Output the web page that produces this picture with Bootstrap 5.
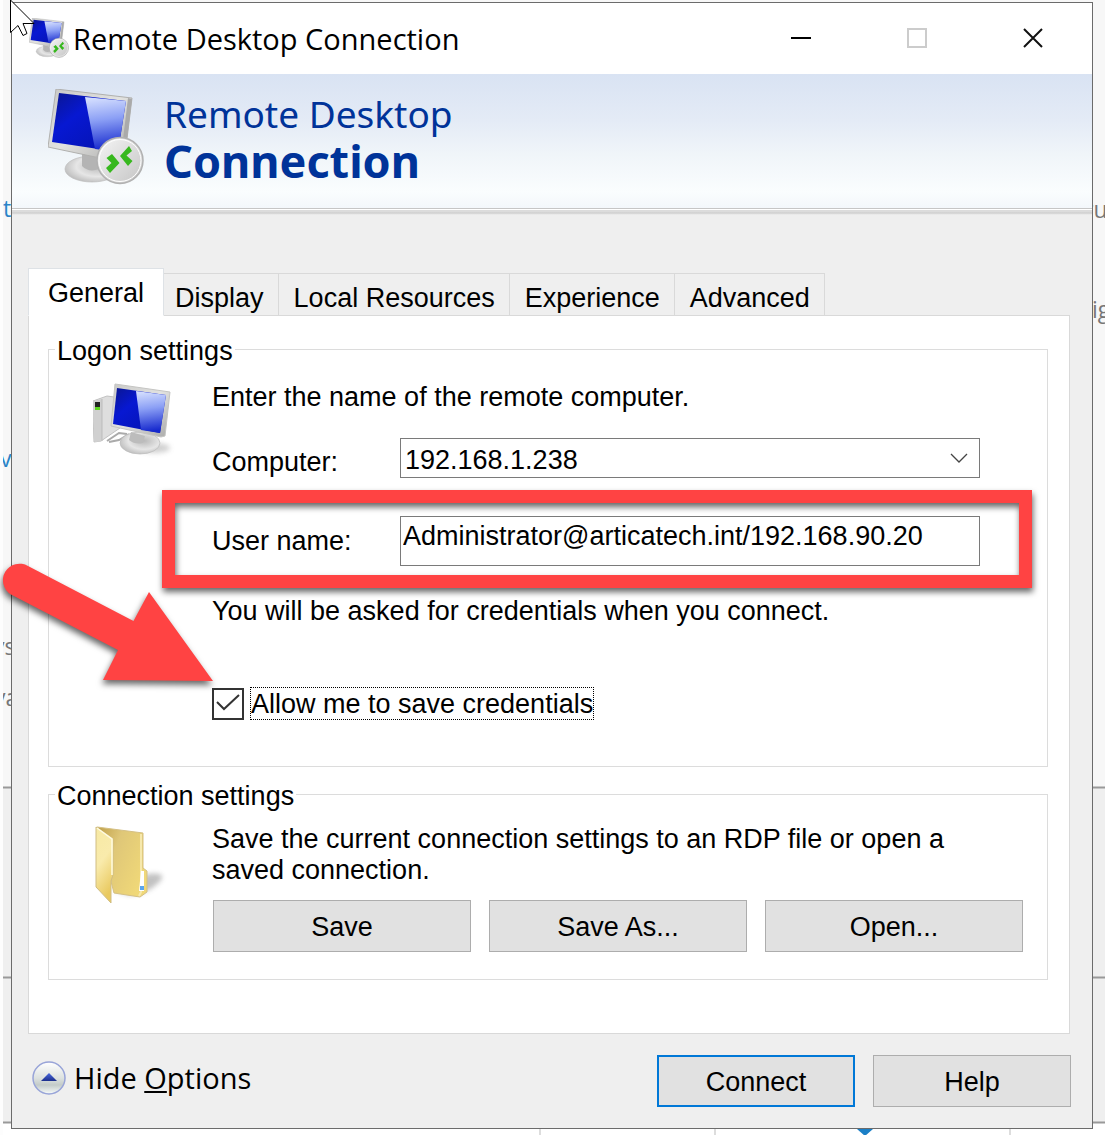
<!DOCTYPE html>
<html lang="en">
<head>
<meta charset="utf-8">
<meta name="viewport" content="width=device-width, initial-scale=1">
<title>Remote Desktop Connection</title>
<link href="https://cdn.jsdelivr.net/npm/bootstrap@5.3.0/dist/css/bootstrap.min.css" rel="stylesheet">
<style>
  body { background: #fff; color: #000; font-family: "Liberation Sans", Arial, sans-serif; font-size: 27px; line-height: 31px; overflow-x: hidden; }
  .edge { flex: none; display: block; }
  .middle { min-width: 0; background: #f7f7f7; padding-top: 2px; }
  .rdp-window { border: 1px solid #6b6b6b; background: #efefef; }
  .title-bar { height: 71px; background: #fff; padding: 0 1px 2px 17px; }
  .title-text { font-family: "Open Sans", sans-serif; font-size: 29px; line-height: 36px; margin: 0 0 0 4px; padding-top: 2px; font-weight: 400; }
  .caption-btn { width: 116px; height: 69px; border: 0; background: none; padding: 0; display: flex; align-items: center; justify-content: center; }
  .banner { height: 134px; padding: 0 0 8px 36px; background: linear-gradient(#d9e3f3, #e4ebf6 35%, #f0f5f9 60%, #fafdfe 88%, #f3f7fb); color: #003399; }
  .banner-text { font-family: "Noto Sans", sans-serif; font-size: 37px; line-height: 47px; margin-left: 20px; }
  .banner-text strong { font-size: 45px; }
  .banner-text span, .banner-text strong { display: block; }
  .banner-rule { height: 7px; background: linear-gradient(#c6c6c6 0 1px, #fff 1px 2px, #dcdcdc 2px 4px, #cbcbcb 5px, #e4e4e4 6px, #efefef 7px); }
  .tabs-area { padding: 53px 22px 0 16px; }
  .tab-strip { align-items: flex-end; flex-wrap: nowrap; margin-bottom: -1px; border: 0; position: relative; }
  .tab-strip .nav-link { border: 1px solid #d9d9d9; border-left-width: 0; border-radius: 0; color: #000; background: #efefef; height: 43px; padding: 8px 14px 0 15px; white-space: nowrap; margin: 0; }
  .tab-strip .nav-link.active { border-left-width: 1px; border-bottom-color: #fff; background: #fff; height: 48px; padding: 2px 19px 0 19px; color: #000; }
  .tab-strip .nav-link.second { padding-left: 11px; }
  .tab-panel { background: #fff; border: 1px solid #d9d9d9; padding: 16px 21px 53px 19px; }
  .group-box { border: 1px solid #dcdcdc; min-width: 0; }
  .group-box + .group-box { margin-top: 10px; }
  .group-box legend { float: none; width: auto; font-size: 27px; line-height: 30px; margin: 0 0 0 6px; padding: 4px 2px 0; }
  .logon-body { padding: 16px 67px 46px 44px; }
  .connection-body { padding: 13px 24px 27px 44px; }
  .icon-col { width: 119px; flex: none; }
  .field-label { width: 188px; flex: none; }
  .field-box { border: 1px solid #7a7a7a; border-radius: 0; background-color: #fff; color: #000; font-size: 27px; line-height: 30px; min-width: 0; }
  select.field-box { height: 40px; padding: 5px 4px 2px; appearance: none; }
  input.field-box { height: 50px; padding: 0 2px 10px; }
  .chevron { right: 12px; top: 15px; pointer-events: none; }
  .computer-row { margin-top: 25px; }
  .computer-row .field-label { padding-top: 9px; }
  .user-row { margin-top: 38px; }
  .marker-frame { inset: -26px -52px -22px -50px; border: 13px solid #ff4343; filter: drop-shadow(1px 4px 3px rgba(0,0,0,.6)); pointer-events: none; }
  .hint { margin: 30px 0 0; }
  .save-check { margin-top: 60px; gap: 6px; }
  .save-check input { width: 32px; height: 32px; margin: 0; border: 2px solid #333; border-radius: 0; appearance: none; background: #fff; flex: none; }
  .save-check label { border: 1px dotted #000; line-height: 29px; padding-top: 2px; }
  .tick { left: 4px; top: 6px; pointer-events: none; }
  .push { border: 1px solid #adadad; border-radius: 0; background: #e1e1e1; color: #000; font-size: 27px; line-height: 30px; height: 52px; padding: 2px 0 0; }
  .push.default { border: 2px solid #0078d7; }
  .push-row { gap: 18px; margin: 14px 0 0 1px; }
  .footer-bar { padding: 21px 21px 21px 20px; gap: 18px; }
  .footer-bar .push { width: 198px; }
  .options-link { font-family: "Open Sans", sans-serif; font-size: 29px; line-height: 36px; color: #000; text-decoration: none; gap: 8px; padding-bottom: 6px; }
  .arrow-mark { left: 0; top: 555px; pointer-events: none; }
  .arrow-mark path { filter: drop-shadow(-1px 4px 3px rgba(0,0,0,.6)); }
  .pointer-mark { left: 10px; top: 0; pointer-events: none; }
</style>
<script src="https://cdn.jsdelivr.net/npm/bootstrap@5.3.0/dist/js/bootstrap.bundle.min.js"></script>
</head>
<body>
<svg width="0" height="0" class="position-absolute" aria-hidden="true">
  <defs>
    <linearGradient id="screen" x1="0" y1="0" x2="1" y2="1"><stop offset="0" stop-color="#0a1690"/><stop offset=".35" stop-color="#0718d2"/><stop offset="1" stop-color="#0512a8"/></linearGradient>
    <linearGradient id="glare" x1="0" y1="0" x2=".1" y2="1"><stop offset="0" stop-color="#dbe4ff"/><stop offset=".45" stop-color="#8b9ff5"/><stop offset="1" stop-color="#1528cd"/></linearGradient>
    <linearGradient id="bezel" x1="0" y1="0" x2="1" y2="1"><stop offset="0" stop-color="#c9c9c7"/><stop offset=".5" stop-color="#e2e2e0"/><stop offset="1" stop-color="#a9a9a8"/></linearGradient>
    <radialGradient id="stand" cx=".6" cy=".4" r=".65"><stop offset="0" stop-color="#b9b9b9"/><stop offset=".6" stop-color="#e6e6e6"/><stop offset="1" stop-color="#bcbcbc"/></radialGradient>
    <linearGradient id="disc" x1="0" y1="0" x2="1" y2="1"><stop offset="0" stop-color="#f6f6f6"/><stop offset="1" stop-color="#c4c4c4"/></linearGradient>
    <linearGradient id="leafFront" x1="0" y1="0" x2=".3" y2="1"><stop offset="0" stop-color="#f7e9a4"/><stop offset=".5" stop-color="#f9ebac"/><stop offset="1" stop-color="#e9c95f"/></linearGradient>
    <linearGradient id="leafBack" x1="0" y1="0" x2="1" y2=".6"><stop offset="0" stop-color="#bf9f49"/><stop offset=".4" stop-color="#dfc778"/><stop offset="1" stop-color="#f0d878"/></linearGradient>
    <linearGradient id="roundBtn" x1="0" y1="0" x2="0" y2="1"><stop offset="0" stop-color="#fff"/><stop offset=".5" stop-color="#dde2e0"/><stop offset=".72" stop-color="#c3cbc9"/><stop offset="1" stop-color="#f8fcfb"/></linearGradient>
    <linearGradient id="upMark" x1="0" y1="0" x2="0" y2="1"><stop offset="0" stop-color="#4a6ae0"/><stop offset="1" stop-color="#1c2f8c"/></linearGradient>
    <filter id="soft" x="-30%" y="-60%" width="160%" height="220%"><feGaussianBlur stdDeviation="2.5"/></filter>
    <symbol id="remote-pc" viewBox="0 0 96 96">
      <ellipse cx="44" cy="80" rx="27" ry="13" fill="url(#stand)" stroke="#bdbdbd" stroke-width=".7"/>
      <path d="M34 64l20 6-3 10q-10 4-17-3z" fill="#b4b4b4"/>
      <path d="M8 0L84 9 77 66 52 69 0 58z" fill="url(#bezel)" stroke="#b0b0ae" stroke-width="1"/>
      <path d="M80 9l4 1-7 56-4 1z" fill="#aaa"/>
      <path d="M11 4L78 12 70 63 4 53z" fill="url(#screen)"/>
      <path d="M37 8L78 12 70 63 47 60z" fill="url(#glare)"/>
      <circle cx="72" cy="71.500" r="23" fill="url(#disc)" stroke="#b1b1b1" stroke-width="1.500"/>
      <circle cx="72" cy="71.500" r="21" fill="none" stroke="#fff" stroke-width="1"/>
      <path d="M58.500 69L64 65 71.500 74 62 84 58 79 63.500 74z" fill="#37b81e"/>
      <path d="M81 57L84 62 78.500 66.500 84.500 72 80 77 72 67z" fill="#37b81e"/>
    </symbol>
  </defs>
</svg>

<div class="d-flex position-relative">
  <svg class="edge" width="11" height="1135" aria-hidden="true">
    <rect width="3" height="1135" fill="#fdfdfd"/><rect x="3" width="8" height="787" fill="#f7f7f7"/><rect x="3" y="787" width="8" height="336" fill="#efefef"/>
    <path d="M3 787.500h8M3 977.500h8M3 1122.500h8" stroke="#999" stroke-width="2"/>
    <g font-family="Open Sans, sans-serif" font-size="23"><text x="3" y="217" fill="#2a84c8">t</text><text x="0" y="467" fill="#2a84c8">v</text><g fill="#777"><text x="-7" y="655">ys</text><text x="-6" y="706">va</text></g></g>
    <path d="M0 190h3v530h-3z" fill="#fdfdfd"/>
  </svg>

  <div class="middle flex-grow-1">
    <main class="rdp-window">
      <header class="title-bar d-flex align-items-center">
        <svg width="40" height="40" aria-hidden="true"><use href="#remote-pc"/></svg>
        <h1 class="title-text flex-grow-1">Remote Desktop Connection</h1>
        <button class="caption-btn" type="button" aria-label="Minimize"><svg width="20" height="20"><path d="M0 10h20" stroke="#000" stroke-width="2"/></svg></button>
        <button class="caption-btn" type="button" aria-label="Maximize" disabled><svg width="20" height="20"><path d="M1 1h18v18h-18z" fill="none" stroke="#ccc" stroke-width="2"/></svg></button>
        <button class="caption-btn" type="button" aria-label="Close"><svg width="20" height="20"><path d="M1 1l18 18M19 1l-18 18" stroke="#111" stroke-width="2"/></svg></button>
      </header>

      <div class="banner d-flex align-items-center">
        <svg width="96" height="96" aria-hidden="true"><use href="#remote-pc"/></svg>
        <div class="banner-text"><span>Remote Desktop</span><strong>Connection</strong></div>
      </div>
      <div class="banner-rule"></div>

      <div class="tabs-area">
        <div class="nav nav-tabs tab-strip" role="tablist">
          <button class="nav-link active" type="button" role="tab" aria-selected="true">General</button>
          <button class="nav-link second" type="button" role="tab" aria-selected="false">Display</button>
          <button class="nav-link" type="button" role="tab" aria-selected="false">Local Resources</button>
          <button class="nav-link" type="button" role="tab" aria-selected="false">Experience</button>
          <button class="nav-link" type="button" role="tab" aria-selected="false">Advanced</button>
        </div>

        <form class="tab-panel" id="rdp">
          <fieldset class="group-box">
            <legend>Logon settings</legend>
            <div class="logon-body d-flex">
              <div class="icon-col">
                <svg width="82" height="76" viewBox="0 0 82 76" aria-hidden="true">
                  <ellipse cx="62" cy="66" rx="15" ry="5" fill="#999" opacity=".45" filter="url(#soft)"/>
                  <path d="M14 59l12-8 8 1M16 60l10-2 10-6" fill="none" stroke="#aaa" stroke-width="2"/>
                  <path d="M0 19l14-5 14 2-1 30-19 13-7 1q-1-20-1-41z" fill="#dedede" stroke="#c2c2c2"/>
                  <path d="M0 19l9-2v42l-6 1q-2 0-2-3z" fill="#d0d0d0"/>
                  <path d="M9 17v42" stroke="#bbb"/><path d="M2 20h5v5h-5z" fill="#222"/><path d="M2 25h5v3h-5z" fill="#5bd51d"/>
                  <ellipse cx="47" cy="61" rx="20" ry="11" fill="url(#stand)" stroke="#bbb" stroke-width=".7"/>
                  <path d="M38 50l14 4-2 7q-8 2-14-3z" fill="#bcbcbc"/>
                  <path d="M22 2L77 10 72 54 68 55 18 44z" fill="url(#bezel)" stroke="#c5c5c3"/>
                  <path d="M24 6L73 13 67 51 20 42z" fill="url(#screen)"/><path d="M43 9L73 13 67 51 48 48z" fill="url(#glare)"/>
                </svg>
              </div>
              <div class="flex-grow-1">
                <div>Enter the name of the remote computer.</div>
                <div class="computer-row d-flex position-relative">
                  <label class="field-label" for="computer">Computer:</label>
                  <select class="field-box flex-grow-1" id="computer"><option>192.168.1.238</option></select>
                  <svg class="chevron position-absolute" width="18" height="11" aria-hidden="true"><path d="M1 1l8 8 8-8" fill="none" stroke="#444" stroke-width="1.300"/></svg>
                </div>
                <div class="user-row d-flex align-items-center position-relative">
                  <label class="field-label" for="user">User name:</label>
                  <input class="field-box flex-grow-1" id="user" type="text" value="Administrator@articatech.int/192.168.90.20">
                  <div class="marker-frame position-absolute"></div>
                </div>
                <p class="hint">You will be asked for credentials when you connect.</p>
                <div class="save-check d-flex align-items-center position-relative">
                  <input id="allow" type="checkbox" checked>
                  <svg class="tick position-absolute" width="25" height="20" aria-hidden="true"><path d="M1 9l7 7L23 2" fill="none" stroke="#333" stroke-width="2"/></svg>
                  <label for="allow">Allow me to save credentials</label>
                </div>
              </div>
            </div>
          </fieldset>

          <fieldset class="group-box">
            <legend>Connection settings</legend>
            <div class="connection-body d-flex">
              <div class="icon-col">
                <svg width="76" height="84" viewBox="0 0 76 84" aria-hidden="true">
                  <path d="M20 66l35-16q18-2 13 6-12 14-32 15z" fill="#777" opacity=".45" filter="url(#soft)"/>
                  <path d="M4 3L50 9v35l4 3v21l-7 5-26-4z" fill="url(#leafBack)" stroke="#d5c084"/>
                  <path d="M48 10v58l-2 4" fill="none" stroke="#f6e8ac" stroke-width="2"/>
                  <path d="M48 47h3v20h-5z" fill="#fff"/><path d="M47 62h4v4h-4z" fill="#5ba5ee"/>
                  <path d="M3 3l17 12v36l-2 6v22L3 63z" fill="url(#leafFront)" stroke="#d0bd84"/>
                  <path d="M4 4l15 11v36" fill="none" stroke="#fffbe0" stroke-width="1.500"/>
                </svg>
              </div>
              <div class="flex-grow-1">
                <div class="pe-5">Save the current connection settings to an RDP file or open a saved connection.</div>
                <div class="push-row d-flex">
                  <button class="btn push flex-fill w-100" type="button">Save</button>
                  <button class="btn push flex-fill w-100" type="button">Save As...</button>
                  <button class="btn push flex-fill w-100" type="button">Open...</button>
                </div>
              </div>
            </div>
          </fieldset>
        </form>
      </div>

      <footer class="footer-bar d-flex align-items-center">
        <a class="options-link d-flex align-items-center me-auto" href="#rdp">
          <svg width="34" height="34" aria-hidden="true"><circle cx="17" cy="17" r="16" fill="url(#roundBtn)" stroke="#98a4d8" stroke-width="1.500"/><path d="M9 20l8-8 8 8z" fill="url(#upMark)"/></svg>
          <span>Hide <u>O</u>ptions</span>
        </a>
        <button class="btn push default" type="submit" form="rdp">Connect</button>
        <button class="btn push" type="button">Help</button>
      </footer>
    </main>
    <svg class="d-block" width="100%" height="6" aria-hidden="true"><rect width="100%" height="6" fill="#fff"/><path d="M529 0v6M704 0v6M999 0v6" stroke="#ddd" stroke-width="2"/><path d="M846 0h16l-8 7z" fill="#1b7fc6"/></svg>
  </div>

  <svg class="edge" width="12" height="1135" aria-hidden="true">
    <rect width="12" height="787" fill="#f7f7f7"/><rect y="787" width="12" height="336" fill="#efefef"/>
    <path d="M0 787.500h12M0 977.500h12M0 1122.500h12" stroke="#999" stroke-width="2"/>
    <g font-family="Open Sans, sans-serif" font-size="23" fill="#777"><text x="-9" y="218">ru</text><text x="-1" y="318">ig</text></g>
  </svg>

  <svg class="arrow-mark position-absolute" width="230" height="145" aria-hidden="true">
    <path d="M28 11L133.500 66 149 37 213 126 103 125 118 95 11 39.500A16.500 16.500 0 0 1 28 11z" fill="#ff4343"/>
  </svg>
  <svg class="pointer-mark position-absolute" width="26" height="38" aria-hidden="true"><path d="M.5 0V32.500L8 25.500l5 10 4-2-4-10h11z" fill="#fff" stroke="#000"/></svg>
</div>
</body>
</html>
